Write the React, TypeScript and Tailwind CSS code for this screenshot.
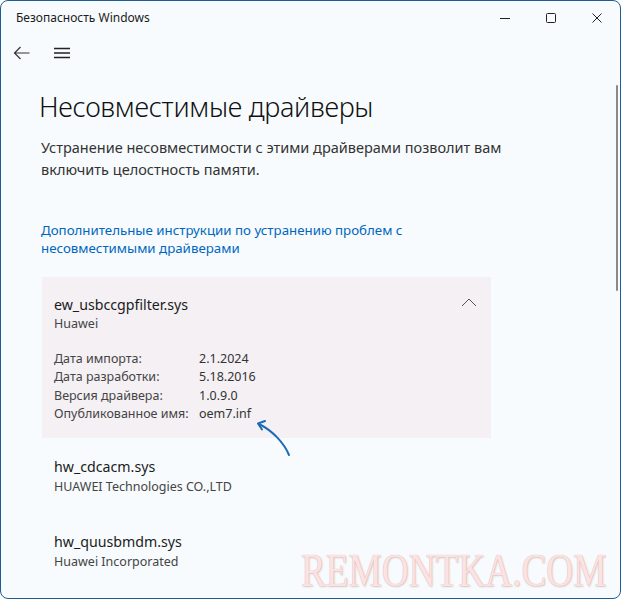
import React from 'react';

const details = [
  ['Дата импорта:', '2.1.2024'],
  ['Дата разработки:', '5.18.2016'],
  ['Версия драйвера:', '1.0.9.0'],
  ['Опубликованное имя:', 'oem7.inf'],
];

const font = { fontFamily: '"Segoe UI", "Noto Sans", "Open Sans", sans-serif' };

export default function App() {
  return (
    <div
      className="relative w-[621px] h-[599px] overflow-hidden rounded-[8px] border border-[#1d5d93] bg-[#f7fbfd] text-[#1b1b1b]"
      style={font}
    >
      {/* title bar */}
      <div className="flex h-[34px] items-center justify-between pl-[15px]">
        <span className="text-[12px] text-[#1b1b1b]">Безопасность Windows</span>
        <div className="flex h-full items-center">
          <div className="flex w-[46px] justify-center">
            <svg width="10" height="10" viewBox="0 0 10 10">
              <path d="M0 5.5h10" stroke="#222" strokeWidth="1" />
            </svg>
          </div>
          <div className="flex w-[46px] justify-center">
            <svg width="10" height="10" viewBox="0 0 10 10">
              <rect x="0.5" y="0.5" width="9" height="9" rx="1" fill="none" stroke="#222" strokeWidth="1" />
            </svg>
          </div>
          <div className="flex w-[46px] justify-center">
            <svg width="10" height="10" viewBox="0 0 10 10">
              <path d="M0.5 0.5l9 9M9.5 0.5l-9 9" stroke="#222" strokeWidth="1" />
            </svg>
          </div>
        </div>
      </div>

      {/* nav */}
      <div className="flex h-[36px] items-center gap-[24px] pl-[12px]">
        <svg width="17" height="14" viewBox="0 0 17 14">
          <path d="M7.5 1L1.5 7l6 6M1.5 7H16.5" fill="none" stroke="#333" strokeWidth="1.2" />
        </svg>
        <svg width="16" height="12" viewBox="0 0 16 12">
          <path d="M0 1.5h16M0 6h16M0 10.5h16" stroke="#222" strokeWidth="1.3" />
        </svg>
      </div>

      {/* scrollbar */}
      <div className="absolute right-[2px] top-[84px] h-[206px] w-[2px] rounded-full bg-[#8a8a8a]" />

      <div className="pl-[38px] pr-[40px] pt-[18px]">
        <h1 className="text-[27px] font-light leading-[36px] tracking-[-0.3px] text-[#111]">
          Несовместимые драйверы
        </h1>
        <p className="mt-[11px] w-[500px] pl-[2px] text-[14.5px] leading-[22px] text-[#333]">
          Устранение несовместимости с этими драйверами позволит вам включить целостность памяти.
        </p>
        <p className="mt-[41px] w-[380px] pl-[2px] text-[13.3px] leading-[18px] text-[#0067c0]">
          Дополнительные инструкции по устранению проблем с несовместимыми драйверами
        </p>

        {/* expanded card */}
        <div className="relative mt-[20px] ml-[3px] w-[449px] bg-[#f4f0f4] px-[12px] pb-[14px] pt-[18px]">
          <div className="flex items-start justify-between">
            <div>
              <div className="text-[14.2px] leading-[20px] text-[#1b1b1b]">ew_usbccgpfilter.sys</div>
              <div className="text-[12.5px] leading-[18px] text-[#444]">Huawei</div>
            </div>
            <svg className="mr-[2px] mt-[3px]" width="16" height="9" viewBox="0 0 16 9">
              <path d="M1 8L8 1l7 7" fill="none" stroke="#555" strokeWidth="1" />
            </svg>
          </div>
          <div className="mt-[17px] grid grid-cols-[145px_1fr] text-[12.5px] leading-[18.4px] text-[#444]">
            {details.map(([k, v]) => (
              <React.Fragment key={k}>
                <span>{k}</span>
                <span className="text-[#333]">{v}</span>
              </React.Fragment>
            ))}
          </div>
        </div>

        <div className="ml-[15px] mt-[19px]">
          <div className="text-[14.2px] leading-[20px] text-[#1b1b1b]">hw_cdcacm.sys</div>
          <div className="text-[12.5px] leading-[20px] text-[#444]">HUAWEI Technologies CO.,LTD</div>
        </div>
        <div className="ml-[15px] mt-[35px]">
          <div className="text-[14.2px] leading-[20px] text-[#1b1b1b]">hw_quusbmdm.sys</div>
          <div className="text-[12.5px] leading-[20px] text-[#444]">Huawei Incorporated</div>
        </div>
      </div>

      {/* annotation arrow */}
      <svg className="absolute left-[250px] top-[414px]" width="45" height="45" viewBox="0 0 45 45">
        <path d="M38 40C33 28 22 16 8 9" fill="none" stroke="#1c6cb5" strokeWidth="2" strokeLinecap="round" />
        <path d="M14 6L7 8.5l4 6" fill="none" stroke="#1c6cb5" strokeWidth="2" strokeLinecap="round" strokeLinejoin="round" />
      </svg>

      {/* watermark */}
      <div
        className="absolute left-[300px] top-[546px] origin-left scale-x-[0.81] whitespace-nowrap text-[46px] leading-[48px] text-[#fbe3e3]"
        style={{ fontFamily: '"Liberation Serif", serif', textShadow: '0 0 1px #e8a0a0, 1px 1px 2px #d9c9c9' }}
      >
        REMONTKA.COM
      </div>
    </div>
  );
}
